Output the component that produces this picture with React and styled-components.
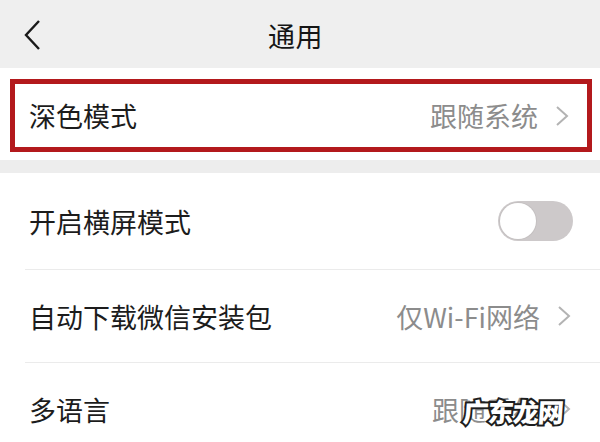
import React from "react";
import styled, { createGlobalStyle } from "styled-components";

const GlobalStyle = createGlobalStyle`
  html, body {
    margin: 0;
    padding: 0;
    background: #ffffff;
    font-family: "Noto Sans CJK SC", "Noto Sans", sans-serif;
  }
`;

const SETTINGS = [
  { label: "开启横屏模式", toggle: true },
  { label: "自动下载微信安装包", value: "仅Wi-Fi网络" },
  { label: "多语言", value: "跟随系统" },
];

function Chevron() {
  return (
    <ChevronSvg viewBox="0 0 14 22" width="14" height="22">
      <polyline points="2,2 12,11 2,20" />
    </ChevronSvg>
  );
}

function SettingRow({ label, value, toggle, last }) {
  return (
    <Row $last={last}>
      <Label>{label}</Label>
      {toggle ? (
        <Switch>
          <Knob />
        </Switch>
      ) : (
        <Right>
          <Value>{value}</Value>
          <Chevron />
        </Right>
      )}
    </Row>
  );
}

export default function App() {
  return (
    <Page>
      <GlobalStyle />
      <Header>
        <BackButton>
          <svg viewBox="0 0 20 32" width="20" height="32">
            <polyline
              points="16,2 3,16 16,30"
              fill="none"
              stroke="#1a1a1a"
              strokeWidth="2.4"
            />
          </svg>
        </BackButton>
        <Title>通用</Title>
        <span />
      </Header>

      <HighlightSection>
        <Highlight>
          <Label>深色模式</Label>
          <Right>
            <Value>跟随系统</Value>
            <Chevron />
          </Right>
        </Highlight>
      </HighlightSection>

      <Gap />

      <List>
        {SETTINGS.map((s, i) => (
          <SettingRow key={s.label} {...s} last={i === SETTINGS.length - 1} />
        ))}
      </List>

      <Watermark>广东龙网</Watermark>
    </Page>
  );
}

const Page = styled.div`
  position: relative;
  width: 600px;
  height: 442px;
  overflow: hidden;
  background: #ffffff;
`;

const Header = styled.div`
  height: 68px;
  background: #efefef;
  display: grid;
  grid-template-columns: 1fr auto 1fr;
  align-items: center;
`;

const BackButton = styled.div`
  display: flex;
  align-items: center;
  padding-left: 23px;
  padding-top: 2px;
`;

const Title = styled.div`
  font-size: 27px;
  color: #151515;
  letter-spacing: 0.5px;
  padding-top: 2px;
  margin-right: 9px;
`;

const HighlightSection = styled.div`
  background: #ffffff;
  padding: 11px 8px 8px 10px;
`;

const Highlight = styled.div`
  height: 63px;
  border: 5px solid #b3191c;
  display: flex;
  align-items: center;
  justify-content: space-between;
  padding: 0 16px 0 14px;
`;

const Gap = styled.div`
  height: 13px;
  background: #ededed;
`;

const List = styled.div`
  background: #ffffff;
`;

const Row = styled.div`
  height: 92px;
  margin-left: 25px;
  padding: 0 27px 0 4px;
  display: flex;
  align-items: center;
  justify-content: space-between;
  border-bottom: ${(p) => (p.$last ? "none" : "1px solid #ebebeb")};
  &:first-child {
    height: 96px;
  }
`;

const Label = styled.span`
  font-size: 27px;
  color: #1c1c1c;
`;

const Right = styled.div`
  display: flex;
  align-items: center;
  gap: 17px;
`;

const Value = styled.span`
  font-size: 27px;
  color: #8c8c8c;
`;

const ChevronSvg = styled.svg`
  fill: none;
  stroke: #b3b3b3;
  stroke-width: 2;
  margin-right: 2px;
`;

const Switch = styled.div`
  width: 75px;
  height: 40px;
  border-radius: 20px;
  background: #cdc9ca;
  display: flex;
  align-items: center;
  padding: 2px;
  box-sizing: border-box;
`;

const Knob = styled.div`
  width: 36px;
  height: 36px;
  border-radius: 50%;
  background: #ffffff;
  box-shadow: 0 0 0 1px #c4c0c1;
`;

const Watermark = styled.div`
  position: absolute;
  left: 463px;
  top: 393px;
  font-size: 26px;
  line-height: 36px;
  font-weight: 900;
  color: #ffffff;
  -webkit-text-stroke: 4px #1e1e1e;
  paint-order: stroke fill;
  letter-spacing: -1px;
  transform: skewX(-4deg);
`;
